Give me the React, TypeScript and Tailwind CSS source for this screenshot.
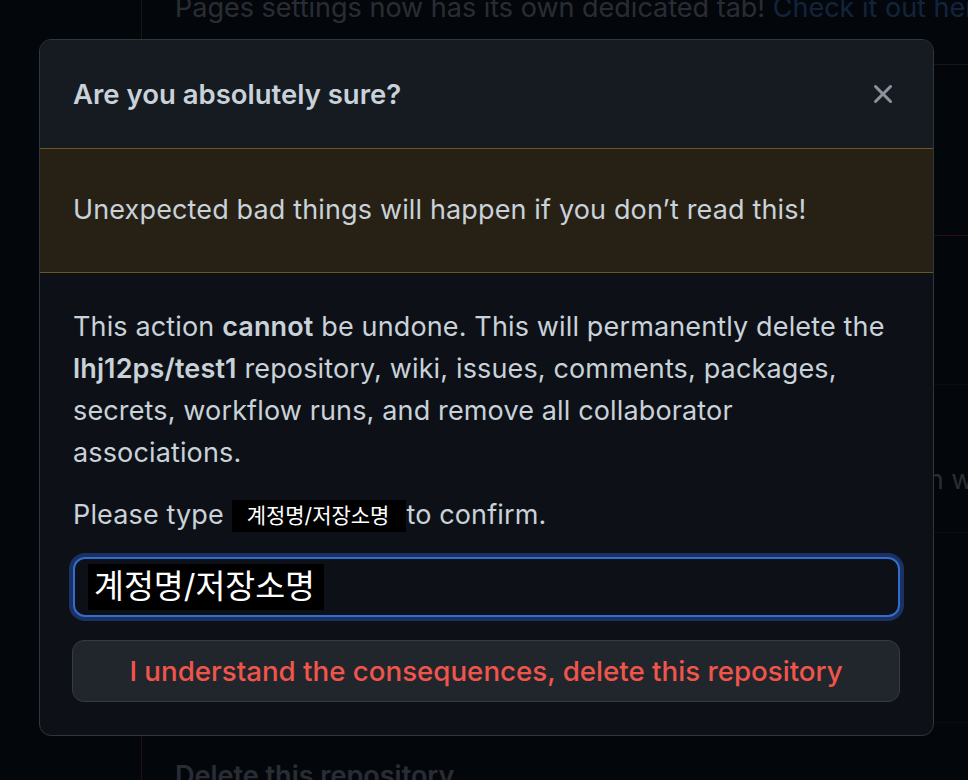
import React from 'react';

const sans = "font-['Inter','Noto_Sans_CJK_KR',sans-serif]";

function XIcon() {
  return (
    <svg width="32" height="32" viewBox="0 0 16 16" fill="currentColor" aria-hidden="true">
      <path d="M3.72 3.72a.75.75 0 0 1 1.06 0L8 6.94l3.22-3.22a.749.749 0 0 1 1.275.326.749.749 0 0 1-.215.734L9.06 8l3.22 3.22a.749.749 0 0 1-.326 1.275.749.749 0 0 1-.734-.215L8 9.06l-3.22 3.22a.751.751 0 0 1-1.042-.018.751.751 0 0 1-.018-1.042L6.94 8 3.72 4.78a.75.75 0 0 1 0-1.06Z" />
    </svg>
  );
}

// settings page behind the dialog (mostly hidden by backdrop + modal)
function SettingsPage() {
  const rows = [
    { title: 'Change repository visibility', desc: 'This repository is currently public.', h: 'h-[148px]' },
    { title: 'Transfer ownership', desc: 'Transfer this repository to another user or to an organization where you have the ability to create repositories.', h: 'h-[148px]' },
    { title: 'Archive this repository', desc: 'Mark this repository as archived and read-only.', h: 'h-[190px]' },
    { title: 'Delete this repository', desc: 'Once you delete a repository, there is no going back. Please be certain.', h: 'h-[190px]' },
  ];
  return (
    <div className="flex h-[780px] w-full overflow-hidden bg-[#0d1117]">
      <div className="w-[141px] shrink-0" />
      <div className="w-[1200px] shrink-0 text-[27px] leading-[42px] text-[#c9d1d9]">
        <div className="h-[65px] overflow-hidden rounded-b-[12px] border-x border-b border-[#7a6433] px-[33px]">
          <p className="-mt-[13px] whitespace-nowrap">
            Pages settings now has its own dedicated tab! <span className="text-[#58a6ff]">Check it out here!</span>
          </p>
        </div>
        <h2 className="mt-[80px] mb-[48px] px-[2px] text-[40px] font-normal leading-[42px]">Danger Zone</h2>
        <div className="rounded-[12px] border border-[#da3633]">
          {rows.map((r, i) => (
            <div key={r.title} className={`${r.h} ${i > 0 ? 'border-t border-[#30363d]' : ''} px-[33px] pt-[32px]`}>
              <div className="font-semibold">{r.title}</div>
              <div className="whitespace-nowrap">{r.desc}</div>
            </div>
          ))}
        </div>
      </div>
    </div>
  );
}

export default function App() {
  return (
    <div className={`relative h-[780px] w-full overflow-hidden ${sans}`}>
      <SettingsPage />
      <div className="absolute inset-0 bg-[#010409]/80" />

      <div className="absolute left-[39px] top-[39px] w-[895px] overflow-hidden rounded-[12px] border border-[#30363d] bg-[#0d1117] text-[#c9d1d9]">
        <div className="flex h-[108px] items-center justify-between bg-[#161b22] pl-[33px] pr-[34px]">
          <h1 className="text-[27.5px] font-semibold leading-[42px] text-[#c9d1d9]">Are you absolutely sure?</h1>
          <button type="button" className="flex h-8 w-8 items-center justify-center text-[#8b949e]">
            <XIcon />
          </button>
        </div>

        <div className="border-y border-[#6b5322] bg-[#272115] px-[33px] pt-[40px] pb-[41px] text-[27px] leading-[42px] tracking-[0.14px]">
          Unexpected bad things will happen if you don’t read this!
        </div>

        <div className="pl-[32px] pr-[33px] pt-[33px] pb-[33px] text-[27px] leading-[42px] tracking-[0.14px]">
          <p className="mb-[20px] pr-[7px] pl-[1px]">
            This action <strong className="font-semibold">cannot</strong> be undone. This will permanently delete the{' '}
            <strong className="font-semibold">lhj12ps/test1</strong> repository, wiki, issues, comments, packages, secrets,
            workflow runs, and remove all collaborator associations.
          </p>
          <p className="mb-[21px] pl-[1px]">
            Please type{' '}
            <span className="inline-block bg-black pl-[15px] pr-[17px] align-[1px] text-[21px] leading-[32px] tracking-normal text-white">
              계정명/저장소명
            </span>
            to confirm.
          </p>
          <div className="ml-[1px] flex h-[60px] items-center rounded-[12px] border-2 border-[#316dca] bg-[#0d1117] px-[13px] ring-4 ring-[#1b3163]">
            <span className="bg-black pl-[6px] pr-[9px] text-[32.5px] leading-[46px] tracking-normal text-white">계정명/저장소명</span>
          </div>
          <button
            type="button"
            className="mt-[23px] flex h-[62px] w-full items-center justify-center rounded-[12px] border border-[#363b42] bg-[#21262d] text-[27.7px] font-medium tracking-normal text-[#f0554b]"
          >
            I understand the consequences, delete this repository
          </button>
        </div>
      </div>
    </div>
  );
}
